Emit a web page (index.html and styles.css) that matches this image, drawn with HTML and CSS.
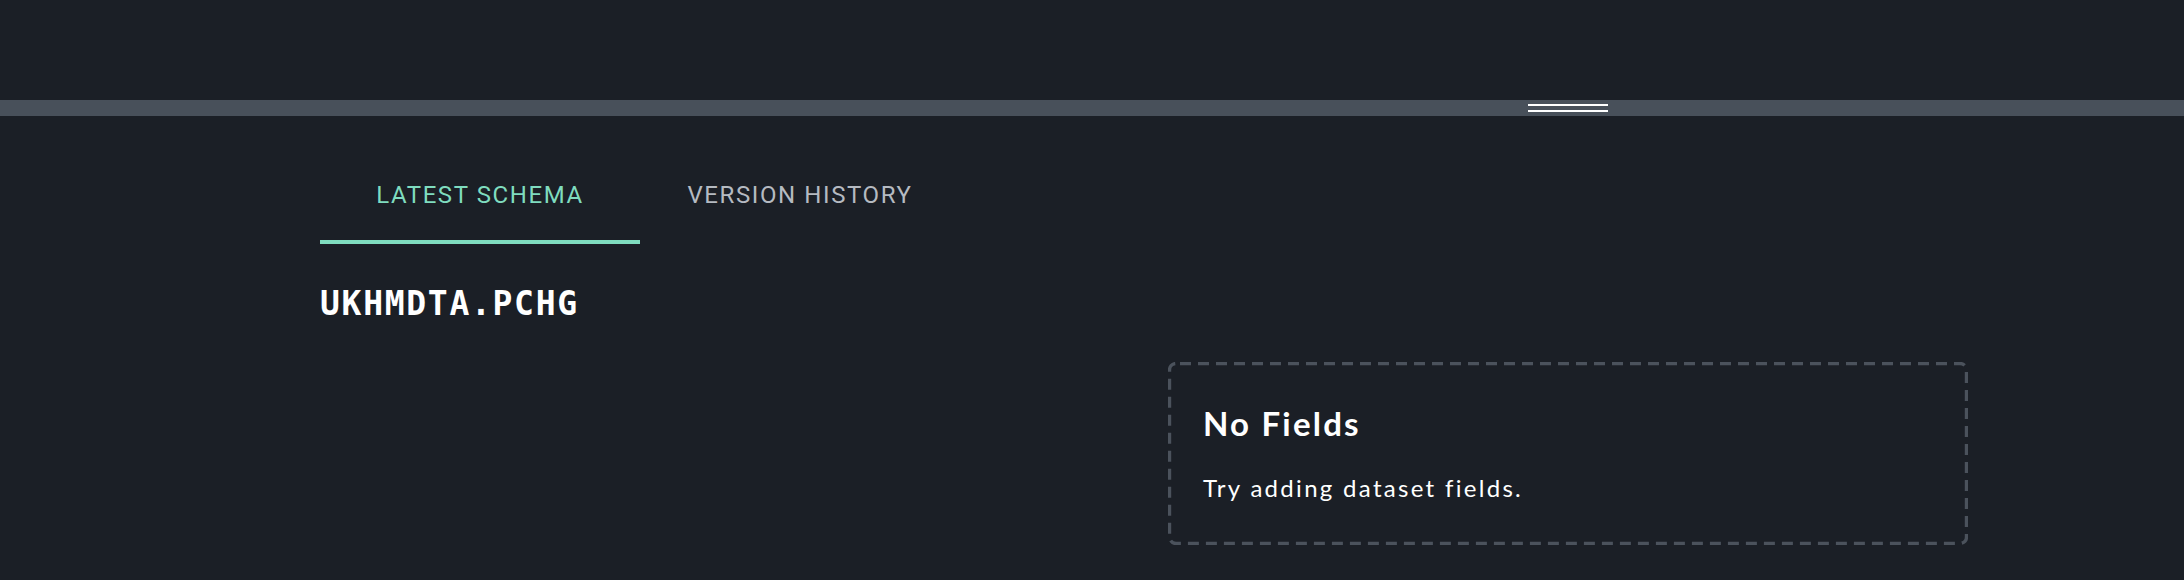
FILE: index.html
```html
<!DOCTYPE html>
<html lang="en">
<head>
<meta charset="utf-8">
<title>Dataset</title>
<link rel="stylesheet" href="styles.css">
</head>
<body>
  <div class="top-pane"></div>
  <div class="divider">
    <div class="handle"></div>
  </div>
  <main class="content">
    <nav class="tabs">
      <div class="tab tab-active">LATEST SCHEMA</div>
      <div class="tab">VERSION HISTORY</div>
    </nav>
    <h1 class="dataset-name">UKHMDTA.PCHG</h1>
    <section class="body-grid">
      <div class="left-col"></div>
      <div class="empty-box">
        <h2 class="empty-title">No Fields</h2>
        <p class="empty-body">Try adding dataset fields.</p>
      </div>
    </section>
  </main>
</body>
</html>
```
FILE: styles.css
```css
html, body {
  margin: 0;
  padding: 0;
}
body {
  background: #1b1f26;
  color: #ffffff;
  font-family: "Lato", "Open Sans", sans-serif;
  width: 2184px;
  height: 580px;
  overflow: hidden;
}
.top-pane {
  height: 100px;
}
.divider {
  height: 16px;
  background: #48505a;
  display: flex;
  align-items: flex-start;
}
.handle {
  margin-left: 1528px;
  margin-top: 4px;
  width: 80px;
  height: 4px;
  border-top: 2px solid #ffffff;
  border-bottom: 2px solid #ffffff;
}
.content {
  padding-left: 320px;
}
.tabs {
  display: flex;
}
.tab {
  width: 320px;
  box-sizing: border-box;
  padding: 65px 0 31px;
  border-bottom: 4px solid transparent;
  text-align: center;
  font-family: "Roboto", "Liberation Sans", sans-serif;
  font-size: 24px;
  line-height: 28px;
  letter-spacing: 1.6px;
  color: #b5bac1;
}
.tab-active {
  color: #7fdcbf;
  border-bottom-color: #7fdcbf;
}
.dataset-name {
  margin: 40px 0 0;
  font-family: "DejaVu Sans Mono", "Liberation Mono", monospace;
  font-size: 33px;
  line-height: 40px;
  font-weight: 700;
  letter-spacing: 1.7px;
  color: #ffffff;
}
.body-grid {
  margin-top: 38px;
  display: grid;
  grid-template-columns: 848px 800px;
}
.empty-box {
  box-sizing: border-box;
  height: 183px;
  padding: 41px 35px 43px;
  background-repeat: no-repeat;
  background-image: url("data:image/svg+xml,%3Csvg xmlns='http://www.w3.org/2000/svg' width='800' height='183'%3E%3Crect x='1.5' y='1.5' width='797' height='180' rx='6.5' ry='6.5' fill='none' stroke='%234b525c' stroke-width='3.4' stroke-dasharray='11 7' stroke-dashoffset='-4'/%3E%3C/svg%3E");
}
.empty-title {
  margin: 0;
  font-size: 33px;
  line-height: 40px;
  font-weight: 700;
  letter-spacing: 2.2px;
}
.empty-body {
  margin: 31px 0 0;
  font-size: 24px;
  line-height: 28px;
  letter-spacing: 2.3px;
}
```
